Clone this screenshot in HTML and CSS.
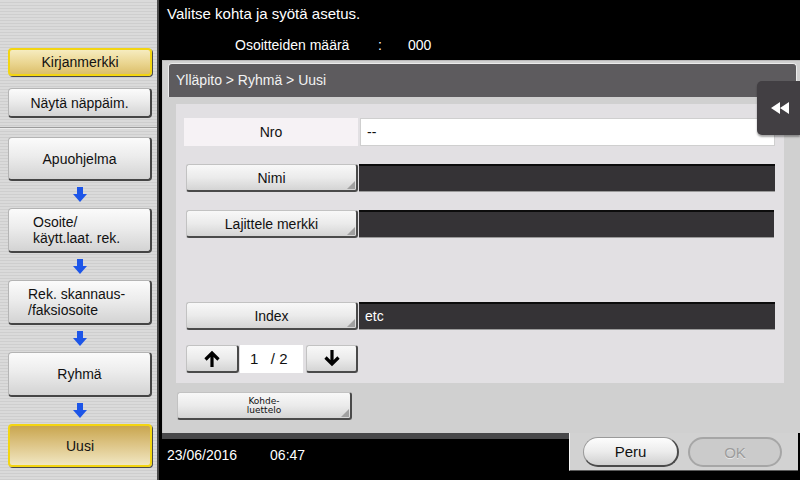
FILE: index.html
```html
<!DOCTYPE html>
<html lang="fi">
<head>
<meta charset="utf-8">
<title>Ryhmä - Uusi</title>
<link rel="stylesheet" href="styles.css">
</head>
<body>
<div class="screen">
  <aside class="sidebar">
    <div class="side-top">
      <div class="sbtn yellow kirja">Kirjanmerkki</div>
      <div class="sbtn nayta">Näytä näppäim.</div>
    </div>
    <div class="side-sep"></div>
    <div class="side-flow">
      <div class="sbtn step apu">Apuohjelma</div>
      <div class="flow-arrow"><svg width="14" height="15" viewBox="0 0 14 15"><path d="M4 0H10V7H14L7 15L0 7H4Z" fill="#1d55e8"/></svg></div>
      <div class="sbtn step left1">Osoite/<br>käytt.laat. rek.</div>
      <div class="flow-arrow"><svg width="14" height="15" viewBox="0 0 14 15"><path d="M4 0H10V7H14L7 15L0 7H4Z" fill="#1d55e8"/></svg></div>
      <div class="sbtn step left2">Rek. skannaus-<br>/faksiosoite</div>
      <div class="flow-arrow"><svg width="14" height="15" viewBox="0 0 14 15"><path d="M4 0H10V7H14L7 15L0 7H4Z" fill="#1d55e8"/></svg></div>
      <div class="sbtn step">Ryhmä</div>
      <div class="flow-arrow"><svg width="14" height="15" viewBox="0 0 14 15"><path d="M4 0H10V7H14L7 15L0 7H4Z" fill="#1d55e8"/></svg></div>
      <div class="sbtn yellow-on uusi">Uusi</div>
    </div>
  </aside>

  <main class="main">
    <header class="msg">
      <div class="msg1">Valitse kohta ja syötä asetus.</div>
      <div class="msg2"><span class="cnt-label">Osoitteiden määrä</span><span class="colon">:</span><span class="cnt">000</span></div>
    </header>

    <section class="panel">
      <div class="panel-body">
        <div class="crumb">Ylläpito &gt; Ryhmä &gt; Uusi</div>
        <div class="form">
          <div class="row">
            <div class="label">Nro</div>
            <div class="value white">--</div>
          </div>
          <div class="row">
            <div class="gbtn corner field-btn">Nimi</div>
            <div class="value dark"></div>
          </div>
          <div class="row">
            <div class="gbtn corner field-btn">Lajittele merkki</div>
            <div class="value dark short"></div>
          </div>
          <div class="row spacer"></div>
          <div class="row">
            <div class="gbtn corner field-btn">Index</div>
            <div class="value dark">etc</div>
          </div>
          <div class="pager">
            <div class="gbtn pg-up"><svg width="16" height="17" viewBox="0 0 16 17"><path d="M8 17V3M1.5 9.5L8 3L14.5 9.5" fill="none" stroke="#000" stroke-width="3.2"/></svg></div>
            <div class="pg-box">1&nbsp;&nbsp; / 2</div>
            <div class="gbtn pg-down"><svg width="16" height="17" viewBox="0 0 16 17"><path d="M8 0V14M1.5 7.5L8 14L14.5 7.5" fill="none" stroke="#000" stroke-width="3.2"/></svg></div>
          </div>
        </div>
        <div class="gbtn corner kohde"><span class="kohde-text">Kohde-<br>luettelo</span></div>
        <div class="collapse"><svg width="19" height="12" viewBox="0 0 19 12"><path d="M9 0V12L0 6Z M18 0V12L9 6Z" fill="#fff"/></svg></div>
      </div>
      <div class="panel-foot">
        <div class="datebar"><span>23/06/2016</span><span class="time">06:47</span></div>
        <div class="actions">
          <div class="pill">Peru</div>
          <div class="pill disabled">OK</div>
        </div>
      </div>
    </section>
  </main>
</div>
</body>
</html>
```

FILE: styles.css
```css
* { box-sizing: border-box; }

html, body {
  margin: 0;
  padding: 0;
  background: #000;
}

body {
  width: 800px;
  height: 480px;
  overflow: hidden;
  font-family: "Liberation Sans", Arial, sans-serif;
  font-size: 14px;
  color: #111;
}

.screen {
  display: flex;
  width: 800px;
  height: 480px;
}

/* ---------- sidebar ---------- */
.sidebar {
  width: 159px;
  height: 480px;
  border-right: 2px solid #4a4a4a;
  background: repeating-linear-gradient(to bottom, #dadada 0 2px, #cecece 2px 3px);
  display: flex;
  flex-direction: column;
}

.side-top {
  padding-top: 48px;
  display: flex;
  flex-direction: column;
}

.sbtn {
  margin-left: 8px;
  width: 144px;
  display: flex;
  align-items: center;
  justify-content: center;
  text-align: center;
  line-height: 16px;
  border: 1px solid #b4b4b4;
  border-right: 2px solid #454545;
  border-bottom: 2px solid #454545;
  border-radius: 4px;
  background: linear-gradient(to bottom, #fbfbfb 0%, #ececec 45%, #d3d3d3 100%);
}

.kirja { height: 28px; }
.nayta { height: 30px; margin-top: 12px; }

.yellow {
  border: 2px solid #f3d511;
  box-shadow: 1px 1px 0 #4a4a4a;
  background: linear-gradient(to bottom, #f6ecbf 0%, #ead590 55%, #dcbf6a 100%);
}

.yellow-on {
  border: 2px solid #f3d511;
  box-shadow: 1px 1px 0 #4a4a4a;
  background: linear-gradient(to bottom, #c9a64f 0%, #dcc383 45%, #f1e7c2 100%);
}

.side-sep {
  margin-top: 9px;
  height: 2px;
  background: #9c9c9c;
  border-bottom: 1px solid #ececec;
}

.side-flow {
  padding-top: 8px;
  display: flex;
  flex-direction: column;
}

.step { height: 45px; }
.apu { height: 44px; }
.left1 { justify-content: flex-start; text-align: left; padding-left: 24px; }
.left2 { justify-content: flex-start; text-align: left; padding-left: 19px; }
.uusi { height: 43px; }

.flow-arrow {
  height: 27px;
  padding-left: 73px;
  padding-top: 6px;
}
.flow-arrow svg { display: block; }

/* ---------- main ---------- */
.main {
  width: 641px;
  height: 480px;
  display: flex;
  flex-direction: column;
}

.msg {
  height: 60px;
  color: #fff;
  padding-left: 8px;
}

.msg1 {
  font-size: 15px;
  line-height: 18px;
  padding-top: 5px;
}

.msg2 {
  display: flex;
  line-height: 18px;
  margin-top: 13px;
}

.cnt-label { margin-left: 68px; width: 143px; }
.colon { width: 30px; }

.panel {
  margin-left: 3px;
  width: 638px;
  display: flex;
  flex-direction: column;
}

.panel-body {
  position: relative;
  height: 373px;
  background: #d0d0d0;
  border-top: 1px solid #b8b8b8;
  border-left: 1px solid #c4c4c4;
  padding: 2px 3px 0 5px;
  display: flex;
  flex-direction: column;
}

.crumb {
  height: 34px;
  background: #5d5b5e;
  border: 1px solid #ececec;
  border-bottom: none;
  border-radius: 4px 4px 0 0;
  color: #f2f2f2;
  line-height: 32px;
  padding-left: 7px;
}

.form {
  margin: 7px 13px 0 8px;
  height: 279px;
  background: #e2e0e3;
  padding: 14px 9px 0 8px;
  display: flex;
  flex-direction: column;
}

.row {
  display: flex;
  height: 28px;
  margin-bottom: 18px;
}

.label {
  width: 174px;
  margin-right: 2px;
  background: #f6f2f5;
  display: flex;
  align-items: center;
  justify-content: center;
}

.value {
  flex: 1;
  display: flex;
  align-items: center;
  padding-left: 6px;
}

.value.white {
  background: #fff;
  border: 1px solid #cfcfcf;
}

.value.dark {
  height: 27px;
  background: #353336;
  border-top: 2px solid #0c0c0c;
  box-shadow: 0 1px 0 #9a9a9a;
  color: #fff;
  padding-bottom: 2px;
}

.value.short { margin-right: 1px; }

.gbtn {
  position: relative;
  display: flex;
  align-items: center;
  justify-content: center;
  text-align: center;
  border: 1px solid #c2c2c2;
  border-right: 2px solid #4a4a4a;
  border-bottom: 2px solid #4a4a4a;
  border-radius: 3px;
  background: linear-gradient(to bottom, #f8f8f8 0%, #ebebeb 50%, #d4d4d4 100%);
}

.corner::after {
  content: "";
  position: absolute;
  right: 1px;
  bottom: 1px;
  border-style: solid;
  border-width: 0 0 8px 8px;
  border-color: transparent transparent #a0a0a0 transparent;
}

.field-btn {
  width: 172px;
  margin-left: 2px;
  margin-right: 1px;
}

.pager {
  display: flex;
  height: 28px;
  margin-top: -3px;
  margin-left: 2px;
}

.pg-up, .pg-down { width: 53px; }
.pg-down { width: 52px; margin-left: 3px; }
.pg-up svg, .pg-down svg { display: block; }

.pg-box {
  width: 63px;
  margin-left: 1px;
  background: #fff;
  font-size: 15px;
  line-height: 27px;
  padding-left: 10px;
}

.kohde {
  margin-top: 9px;
  margin-left: 9px;
  width: 175px;
  height: 28px;
}

.kohde-text {
  font-family: "DejaVu Sans", sans-serif;
  font-size: 9px;
  line-height: 9px;
}

.collapse {
  position: absolute;
  top: 20px;
  left: 594px;
  width: 43px;
  height: 54px;
  background: #423f43;
  border-radius: 5px 0 0 5px;
  box-shadow: 0 2px 2px rgba(0,0,0,0.35);
  display: flex;
  align-items: center;
  justify-content: center;
  padding-left: 3px;
}
.collapse svg { display: block; }

.panel-foot {
  display: flex;
  height: 47px;
}

.datebar {
  width: 407px;
  border-top: 6px solid #48484a;
  background: #000;
  color: #fff;
  padding-left: 5px;
  padding-top: 7px;
  line-height: 18px;
}

.time { margin-left: 33px; }

.actions {
  width: 229px;
  height: 38px;
  background: #d2d2d2;
  border-left: 1px solid #f6f6f6;
  border-bottom: 1px solid #5a5a5a;
  display: flex;
  padding: 4px 0 0 13px;
}

.pill {
  width: 96px;
  height: 30px;
  border-radius: 15px;
  border: 1px solid #9a9a9a;
  border-right: 2px solid #4a4a4a;
  border-bottom: 2px solid #4a4a4a;
  background: linear-gradient(to bottom, #fdfdfd 0%, #ececec 50%, #d0d0d0 100%);
  display: flex;
  align-items: center;
  justify-content: center;
  font-size: 15px;
}

.pill.disabled {
  width: 94px;
  margin-left: 9px;
  color: #9c9c9c;
  border: 2px solid #a6a6a6;
  background: #cbcbcb;
  text-shadow: 0 1px 0 #e6e6e6;
}
```
